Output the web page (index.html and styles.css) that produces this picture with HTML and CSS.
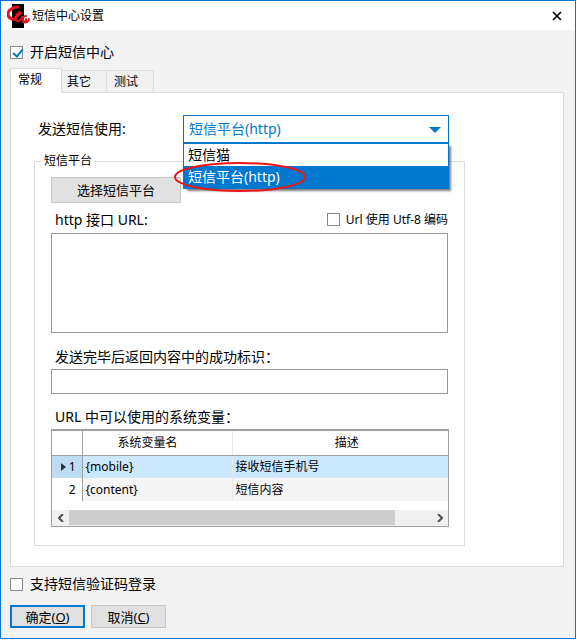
FILE: index.html
```html
<!DOCTYPE html>
<html lang="zh-CN">
<head>
    <meta charset="UTF-8">
    <meta name="viewport" content="width=device-width, initial-scale=1.0">
    <title>短信中心设置</title>
    <link rel="stylesheet" href="styles.css">
</head>
<body>
    <div class="dialog">
        <header class="titlebar">
            <svg class="logo" width="24" height="26" viewBox="0 0 24 26" aria-hidden="true">
                <rect x="5" y="1" width="12" height="24" fill="#000"/>
                <path d="M11 4C6 4 1 7 1 11c0 4 4 6 8 5" fill="none" stroke="#e8141c" stroke-width="3" stroke-linecap="round"/>
                <path d="M8 14c4-1 7-4 5-5-2 0-5 4-4 8 2 3 5 0 6-3" fill="none" stroke="#e8141c" stroke-width="2" stroke-linecap="round"/>
                <path d="M19 13c-3 0-4 2-3 4s4 2 3-1M16 19c3 1 6 0 6-3" fill="none" stroke="#e8141c" stroke-width="2" stroke-linecap="round"/>
            </svg>
            <h1 class="title">短信中心设置</h1>
            <button type="button" class="close" aria-label="关闭">
                <svg width="10" height="10" viewBox="0 0 10 10">
                    <path d="M1 1l8 8M9 1L1 9" stroke="#000" stroke-width="1.6"/>
                </svg>
            </button>
        </header>

        <form class="content">
            <label class="check enable"><input type="checkbox" checked> 开启短信中心</label>

            <div class="tabs" role="tablist">
                <button type="button" class="tab active" role="tab" aria-selected="true">常规</button>
                <button type="button" class="tab" role="tab">其它</button>
                <button type="button" class="tab" role="tab">测试</button>
            </div>

            <div class="panel" role="tabpanel">
                <div class="send-row">
                    <label for="send-by">发送短信使用:</label>
                    <div class="combo">
                        <select id="send-by">
                            <option>短信猫</option>
                            <option selected>短信平台(http)</option>
                        </select>
                        <svg class="arrow" width="12" height="6" viewBox="0 0 12 6">
                            <path d="M0 0h12L6 6z" fill="#0078d0"/>
                        </svg>
                        <ul class="dropdown" role="listbox">
                            <li role="option">短信猫</li>
                            <li class="selected" role="option" aria-selected="true">短信平台(http)</li>
                        </ul>
                        <svg class="ring" width="132" height="32" viewBox="0 0 132 32">
                            <ellipse cx="66" cy="16" rx="65" ry="14" fill="none" stroke="#f01414" stroke-width="2"/>
                        </svg>
                    </div>
                </div>

                <fieldset class="platform">
                    <legend>短信平台</legend>
                    <button type="button" class="btn choose">选择短信平台</button>
                    <div class="url-row">
                        <label for="url">http 接口 URL:</label>
                        <label class="check small"><input type="checkbox"> Url 使用 Utf-8 编码</label>
                    </div>
                    <textarea id="url"></textarea>

                    <label class="caption" for="success">发送完毕后返回内容中的成功标识：</label>
                    <input type="text" id="success">

                    <p class="caption">URL 中可以使用的系统变量：</p>
                    <div class="grid">
                        <table>
                            <thead>
                                <tr>
                                    <th class="num"></th>
                                    <th class="name">系统变量名</th>
                                    <th class="desc">描述</th>
                                </tr>
                            </thead>
                            <tbody>
                                <tr class="current">
                                    <td class="num">
                                        <svg width="5" height="8" viewBox="0 0 5 8"><path d="M0 0l5 4-5 4z" fill="#333"/></svg>
                                        1
                                    </td>
                                    <td>{mobile}</td>
                                    <td>接收短信手机号</td>
                                </tr>
                                <tr>
                                    <td class="num">2</td>
                                    <td>{content}</td>
                                    <td>短信内容</td>
                                </tr>
                            </tbody>
                        </table>
                        <div class="scrollbar">
                            <button type="button" aria-label="向左">
                                <svg width="6" height="8" viewBox="0 0 6 8"><path d="M5 0L1 4l4 4" fill="none" stroke="#505050" stroke-width="2"/></svg>
                            </button>
                            <div class="track"><div class="thumb"></div></div>
                            <button type="button" aria-label="向右">
                                <svg width="6" height="8" viewBox="0 0 6 8"><path d="M1 0l4 4-4 4" fill="none" stroke="#505050" stroke-width="2"/></svg>
                            </button>
                        </div>
                    </div>
                </fieldset>
            </div>

            <label class="check login"><input type="checkbox"> 支持短信验证码登录</label>

            <div class="actions">
                <button type="button" class="btn primary">确定(<u>O</u>)</button>
                <button type="button" class="btn">取消(<u>C</u>)</button>
            </div>
        </form>
    </div>
</body>
</html>
```
FILE: styles.css
```css
* {
    box-sizing: border-box;
}
body {
    margin: 0;
    padding: 0 1px 1px 0;
    background: #fff;
    color: #000;
    font-family: "Noto Sans", "Noto Sans CJK SC", sans-serif;
    font-size: 14px;
    line-height: 20px;
}
button, input, select, textarea {
    font: inherit;
    color: inherit;
    border-radius: 0;
}
.dialog {
    min-height: calc(100vh - 1px);
    border: 1px solid #0a74cc;
    background: #f2f2f2;
}

/* title bar */
.titlebar {
    display: flex;
    align-items: center;
    gap: 1px;
    height: 29px;
    padding: 0 13px 0 6px;
    background: #fff;
}
.title {
    flex: 1;
    margin: 0;
    font-size: 12px;
    font-weight: normal;
}
.close {
    display: flex;
    padding: 0;
    border: none;
    background: none;
}

.content {
    padding: 12px 11px 10px 9px;
}

/* check boxes */
.check {
    display: flex;
    align-items: center;
    gap: 7px;
}
.check input {
    appearance: none;
    width: 13px;
    height: 13px;
    margin: 0;
    border: 1px solid #8a8a8a;
    background: #fff;
}
.check input:checked::before {
    content: "";
    display: block;
    width: 4px;
    height: 8px;
    margin: 0 0 0 4px;
    border: solid #0078d0;
    border-width: 0 2px 2px 0;
    transform: rotate(40deg);
}
.small {
    gap: 6px;
    font-size: 12px;
}

/* tabs */
.tabs {
    display: flex;
    align-items: flex-end;
    height: 24px;
    margin-top: 6px;
}
.tab {
    height: 22px;
    padding: 0 15px 0 5px;
    border: 1px solid #dcdcdc;
    border-width: 1px 1px 0 0;
    background: #f0f0f0;
    font-size: 12px;
}
.tab + .tab + .tab {
    padding-left: 7px;
}
.tab.active {
    position: relative;
    height: 25px;
    margin-bottom: -1px;
    padding: 0 19px 2px 7px;
    border-left-width: 1px;
    background: #fff;
}
.panel {
    padding: 22px 98px 20px 23px;
    border: 1px solid #dcdcdc;
    background: #fff;
}

.send-row {
    display: flex;
    align-items: center;
    padding: 0 16px 0 4px;
}
.send-row label {
    width: 145px;
}
.combo {
    position: relative;
    flex: 1;
}
.combo select {
    display: block;
    appearance: none;
    width: 100%;
    height: 28px;
    padding: 0 5px;
    border: 1px solid #0078d0;
    background: #fff;
    color: #0078d0;
}
.arrow {
    position: absolute;
    right: 8px;
    top: 12px;
}
.dropdown {
    position: absolute;
    z-index: 1;
    top: 27px;
    left: 0;
    right: 0;
    margin: 0;
    padding: 0;
    border: 1px solid #0078d0;
    border-top-width: 2px;
    background: #fff;
    box-shadow: 3px 3px 2px -1px rgba(0, 0, 0, 0.5);
    list-style: none;
}
.dropdown li {
    padding: 1px 4px;
    line-height: 20px;
}
.dropdown .selected {
    background: #0078d0;
    color: #fff;
}
.ring {
    position: absolute;
    z-index: 2;
    top: 46px;
    left: -9px;
}

/* platform group */
.platform {
    min-width: 0;
    margin: 10px 0 0;
    padding: 8px 16px 18px;
    border: 1px solid #dcdcdc;
}
.platform legend {
    margin-left: -10px;
    padding: 0 3px;
    font-size: 12px;
    line-height: 16px;
}
.btn {
    width: 75px;
    height: 23px;
    padding: 0;
    border: 1px solid #c6c6c6;
    background: #e1e1e1;
    font-size: 13px;
    line-height: 16px;
}
.btn.choose {
    display: block;
    width: 130px;
    height: 26px;
}
.btn.primary {
    border: 2px solid #0078d0;
}
.url-row {
    display: flex;
    justify-content: space-between;
    align-items: center;
    height: 30px;
    padding: 3px 0 0 4px;
}
textarea, input[type="text"] {
    display: block;
    width: 100%;
    margin: 0;
    border: 1px solid #999;
    background: #fff;
}
textarea {
    height: 100px;
    resize: none;
}
input[type="text"] {
    height: 25px;
}
.caption {
    display: block;
    margin: 0;
    padding: 14px 0 2px 4px;
}
p.caption {
    padding-top: 13px;
}

/* variable table */
.grid {
    margin-right: -1px;
    border: 1px solid #a0a0a0;
    border-top-width: 2px;
}
table {
    width: 100%;
    border-collapse: collapse;
    table-layout: fixed;
    font-size: 12px;
}
th, td {
    height: 23px;
    padding: 0 3px;
    text-align: left;
    font-weight: normal;
}
th {
    height: 24px;
    border-bottom: 1px solid #a0a0a0;
    text-align: center;
}
th + th + th, td + td + td {
    border-left: 1px solid #e8e8e8;
}
.num {
    width: 30px;
    padding-right: 6px;
    border-right: 1px solid #a0a0a0;
    text-align: right;
}
.name {
    width: 150px;
    padding-right: 22px;
}
.desc {
    padding-left: 16px;
}
td {
    background: #f5f5f5;
}
td.num {
    background: #fff;
}
.current td {
    background: #cce8ff;
}
.current td.num {
    background: #bcdcf4;
}
.scrollbar {
    display: flex;
    height: 16px;
    margin-top: 9px;
    background: #f0f0f0;
}
.scrollbar button {
    display: flex;
    align-items: center;
    justify-content: center;
    width: 17px;
    padding: 0;
    border: none;
    background: none;
}
.track {
    flex: 1;
}
.thumb {
    width: 90%;
    height: 15px;
    background: #cdcdcd;
}

.login {
    margin-top: 7px;
}
.actions {
    display: flex;
    gap: 6px;
    margin-top: 11px;
}
```
